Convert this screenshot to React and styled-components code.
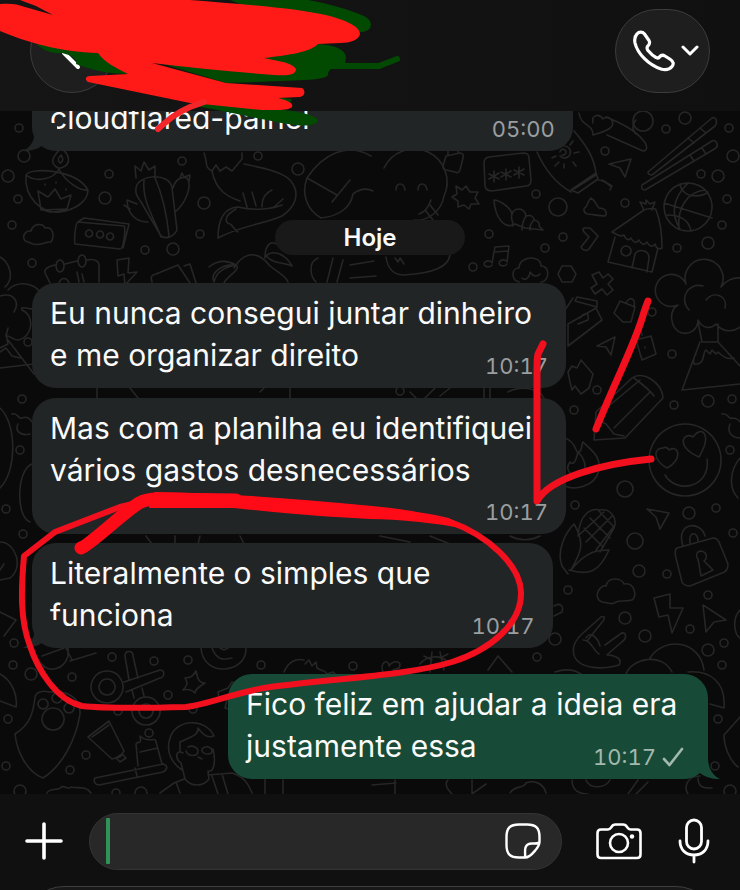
import styled, { createGlobalStyle } from "styled-components"

const GlobalStyle = createGlobalStyle`
    * {
        box-sizing: border-box;
    }

    body {
        margin: 0;
        background: #0a0a0a;
        font-family: Inter, "Liberation Sans", sans-serif;
    }
`;

const Page = styled.div`
    position: relative;
    display: flex;
    flex-direction: column;
    height: 100vh;
    overflow: hidden;
    color: #fafafa;
`;

const IconButton = styled.button`
    display: flex;
    align-items: center;
    justify-content: center;
    padding: 0;
    border: none;
    background: none;
    color: #ffffff;
    cursor: pointer;
`;

//Header
const Header = styled.header`
    display: flex;
    justify-content: space-between;
    flex-shrink: 0;
    height: 111px;
    padding: 9px 30px;
    background: linear-gradient(90deg, #151515, #101010);
    z-index: 1;
`;

const RoundButton = styled(IconButton)`
    height: 84px;
    min-width: 84px;
    border: 1px solid #3c3c3c;
    border-radius: 42px;
    background: #1e1e1e;
`;

const CallButton = styled(RoundButton)`
    gap: 6px;
    width: 95px;
    padding-left: 6px;
`;

//Chat
const Chat = styled.main`
    position: relative;
    display: flex;
    flex: 1;
    flex-direction: column;
    justify-content: flex-end;
    min-height: 0;
    padding: 0 32px 15px;
    overflow: hidden;
    background: #0a0a0a;
`;

const WallpaperSvg = styled.svg`
    position: absolute;
    inset: 0;
    width: 100%;
    height: 100%;
    fill: none;
    stroke: #262626;
    stroke-width: 1.6;
    stroke-linecap: round;
    stroke-linejoin: round;
`;

const Day = styled.div`
    position: relative;
    align-self: center;
    width: 28%;
    margin: 69px 0 28px;
    padding-top: 1px;
    border-radius: 18px;
    background: #191919;
    font-size: 24px;
    font-weight: 600;
    line-height: 34px;
    text-align: center;
`;

const Bubble = styled.article`
    position: relative;
    display: grid;
    flex-shrink: 0;
    align-self: ${({ $mine }) => ($mine ? "flex-end" : "flex-start")};
    width: ${({ $width }) => $width};
    margin-top: ${({ $gap }) => $gap || 0}px;
    padding: 9px 18px 12px;
    border-radius: 24px;
    background: ${({ $mine }) => ($mine ? "#174b38" : "#222526")};
`;

const Text = styled.p`
    grid-area: 1 / 1;
    justify-self: start;
    margin: 0;
    padding-bottom: ${({ $roomy }) => ($roomy ? 31 : 0)}px;
    font-size: 30px;
    line-height: 42px;
    white-space: pre;
`;

const Meta = styled.div`
    display: flex;
    grid-area: 1 / 1;
    align-items: center;
    align-self: end;
    justify-self: end;
    gap: 6px;
    padding-right: ${({ $mine }) => ($mine ? 6 : 0)}px;
    color: ${({ $mine }) => ($mine ? "#a3b8ae" : "#9b9ea0")};
    font-size: 22px;
    font-variant-numeric: tabular-nums;
    line-height: 20px;
`;

const TailSvg = styled.svg`
    position: absolute;
    bottom: 0;
    ${({ $mine }) => ($mine ? "right: -12px;" : "left: -9px; transform: scaleX(-1);")}
    width: 34px;
    height: 28px;
    fill: ${({ $mine }) => ($mine ? "#174b38" : "#222526")};
`;

//Composer
const Composer = styled.footer`
    display: flex;
    align-items: center;
    flex-shrink: 0;
    height: 92px;
    padding: 2px 30px 0 24px;
    background: #101010;
`;

const Field = styled.label`
    display: flex;
    flex: 1;
    align-items: center;
    min-width: 0;
    height: 57px;
    margin: 0 34px 0 25px;
    padding: 0 20px 0 16px;
    border: 1px solid #343434;
    border-radius: 29px;
    background: #282828;
`;

const Caret = styled.span`
    width: 4px;
    height: 46px;
    border-radius: 1px;
    background: #2f9259;
`;

const Input = styled.input`
    flex: 1;
    min-width: 0;
    border: none;
    outline: none;
    background: none;
    color: #fafafa;
    caret-color: #2f9259;
    font: inherit;
    font-size: 30px;
`;

const Actions = styled.div`
    display: flex;
    align-items: center;
    gap: 36px;
`;

const Keyboard = styled.div`
    flex-shrink: 0;
    height: 4px;
    padding: 0 24px;
    overflow: hidden;
    background: #101010;
`;

const KeyboardTop = styled.div`
    height: 80px;
    border: 1px solid #3f3f3f;
    border-radius: 40px;
    background: #181818;
`;

const MarkupSvg = styled.svg`
    position: absolute;
    inset: 0;
    width: 100%;
    height: 100%;
    fill: none;
    stroke-linecap: round;
    stroke-linejoin: round;
    pointer-events: none;
    z-index: 2;
`;

const dots = [
    [24, 156, 6], [8, 176, 6], [18, 199, 4], [12, 225, 4], [109, 174, 4], [105, 198, 6], [182, 161, 4],
    [204, 203, 6], [200, 234, 4], [145, 250, 4], [173, 249, 6], [32, 263, 4], [258, 156, 4], [298, 169, 6],
    [19, 128, 4], [685, 118, 6], [666, 129, 4], [729, 128, 4], [643, 121, 10], [605, 151, 4], [701, 174, 4],
    [718, 176, 6], [733, 156, 6], [536, 194, 4], [558, 207, 9], [625, 203, 4], [727, 199, 4], [722, 225, 4],
    [489, 234, 4], [563, 237, 4], [545, 248, 4], [473, 267, 4], [708, 243, 6], [677, 248, 4], [652, 312, 4],
    [672, 354, 4], [597, 390, 4], [674, 405, 4], [708, 401, 6], [732, 399, 4], [574, 410, 4], [625, 489, 8],
    [730, 450, 4], [575, 505, 4], [716, 508, 4], [689, 513, 6], [635, 541, 8], [733, 533, 4], [639, 571, 6],
    [667, 574, 4], [568, 590, 4], [625, 618, 6], [645, 636, 6], [690, 629, 4], [708, 595, 4], [708, 650, 6],
    [724, 643, 4], [722, 665, 4], [555, 639, 6], [537, 657, 4], [718, 719, 4], [715, 766, 4], [730, 791, 6],
    [22, 399, 4], [20, 450, 4], [6, 509, 4], [23, 534, 4], [14, 643, 4], [13, 665, 4], [31, 674, 6],
    [72, 677, 4], [112, 657, 4], [154, 661, 4], [188, 660, 4], [168, 695, 4], [261, 665, 4], [353, 666, 4],
    [149, 733, 4], [86, 755, 4], [70, 770, 4], [6, 766, 4], [8, 719, 4], [20, 791, 6], [116, 793, 4],
    [141, 793, 6], [193, 709, 4], [118, 711, 4], [28, 342, 4], [400, 391, 4],
];

//Doodles by area of the wallpaper
const doodles = [
    //diya lamp
    "M26 175c4-8 50-6 62 15 0 12-14 20-28 22-18 2-36-14-34-37zM26 175c10 8 28 4 33-6 6 12 20 22 29 21M58 168c-10-6-4-12 3-20 8 6 12 16 0 20zM60 163c-4-4 0-6 1-8 2 3 3 6-1 8M38 191l10 6 7-8 6 10 10-4-4 14-26 1zM42 209c6 4 16 4 24 0M45 184v1M56 182v1M66 189v1",
    //cactus
    "M136 188c2-14 34-16 36 0l5 42c-4 8-12 9-16 6l-20-34c-4-6-6-8-5-14zM144 180c-2 20 8 34 17 57M155 178c8 18 12 38 14 58M136 178l-1-12 6 5 3-9 5 8 6-4v12M173 188c2-8 8-12 14-10 6 8-2 26-12 34M180 178l2-5 2 4 6-2-1 6M137 204l-10-4 1 8c4 10 12 14 20 14M124 205l6 4",
    //speaker, cloud
    "M78 222c-3 0-4 22-3 22l45 5c4 0 6-23 4-23zM78 222l6-4 45 6-6 24M89 230a3.500 3.500 0 1 0 .1 0M100 231a3.500 3.500 0 1 0 .1 0M110 233a3.500 3.500 0 1 0 .1 0",
    "M28 242c-8-2-4-12 3-11 2-8 12-8 14-3 8-2 10 8 6 14-8 0-10 4-18 2z",
    //calendar, bolt
    "M50 283l-5-10c-2-6 10-8 10-8M65 264l12-3M86 260c10-2 14 2 13 8v14M60 260a4 6 0 1 0 .1 0M82 255a4 6 0 1 0 .1 0M59 283c2-6 8-6 10 0M79 282l-2-10M84 282l-2-8M117 260l12-2-1 15 9-1-12 13-1-11-6 2z",
    "M152 282c-2-6 0-7 4-8l22-9 12 18M184 266l6-2 6 19",
    //fox
    "M204 153c4 10 0 14 8 18l4-6 4 6 6-4 6 4 10-12v-6M212 171c4 20 16 26 28 30M244 164c20 4 38 8 46 16 12 14 4 28-8 36-18 8-42 10-64 22 0-18 6-30 20-31 16 4 34 2 44-2M236 209c-14 8-10 14-6 15 2 0 4 6 8 8M243 193l4 14M252 192l4 14M262 207c0-10 4-14 10-17M274 207l9-8",
    //cap and handset
    "M307 178c16-24 40-36 64-22M307 178l30 17M332 202l18-22M307 178c-6 16 0 32 14 40 20-2 30-12 32-24 8-6 14-6 20-3",
    //smiley behind the day label
    "M384 168a30 30 0 0 1 60 28c-2 14-16 26-30 24M396 190c0-8 8-8 9 0M418 190c0-8 8-8 9 0M431 200c-2 6-6 12-12 14M425 210l8 10M430 205l8 10",
    //palm tree and basket
    "M209 267c10-8 20-6 27-2-12 2-20 8-22 17-4-8 6-18 22-17 6 4-10 12-12 18M234 268c8-14 22-20 36-2 10 8 16 10 18 16M265 258c0-16 8-18 14-12M266 256c6-6 18-4 26 10-10-4-18-2-26-10M318 258c-10 4-8 18-2 24M333 258l-6 24M343 260l-6 22M350 265l24-4M350 278l26-2",
    "M386 257c2 14 10 18 18 18 30-2 44-8 46-20M395 258l3 4 2-4 4 6",
    //padlock, password, jigsaw
    "M446 156l14-3c3 0 4 2 3 5l-3 12c-1 3-3 3-5 2l-9-2c-2 0-3-2-3-4zM448 155v-4M458 153v-4",
    "M484 163q0-5 5-6l34-4q6 0 6 5l2 22q0 6-5 6l-34 5q-6 0-7-5zM494 171v11M489 174l10 5M499 173l-10 6M506 169v11M501 172l10 5M511 171l-10 6M519 167v11M514 170l10 5M524 169l-10 6",
    "M456 186l6 4 4-4 4 6 8 0-3 6 4 6-8 0-2 5-5-4-6 2v-6l-6-4 5-3z",
    //shell
    "M494 200c4 0 16 6 18 14 2-6 12-8 14 2 6-2 8 2 8 4 4 0 6 4 5 6l4 4-18-2-10-4c-10 6-20-6-21-24zM512 214c-2 6 2 8 1 12M526 216c-4 6-4 10-4 14M534 220c-4 4-4 6-4 10",
    //balloon
    "M537 152c8 18 20 32 34 40M574 131c12 14 20 26 22 42M571 190l25-17 2 6-20 14zM574 189l22-14M564 146a6 6 0 1 1-4 10M560 152a3 3 0 1 1 2 3M552 158l4-2M555 166l4-4M564 164v4M573 162l3 4M574 153l5-1M570 145l3-4M598 180c6 0 10 4 12 6M602 180l10 6-2 4M586 207c2-4 2-6 5-9 6 4 4 6 8 10 8 0 8 6 6 8-6 0-14-2-18-2-4-2-4-6-1-7z",
    //arm, heart
    "M579 113c2 14 14 10 14 22 14-4 24-8 18-16-4-4-8 0-8 0-4-6-12-4-10 4M606 117c10 4 28 12 36 22 6 6 6 12 1 12l-36-16M636 134c-4-4-4-10 0-14",
    //chopsticks
    "M648 172l64-54c4-2 6 4 3 8l-63 49c-3 0-4-1-4-3zM688 138l6 5M700 128l6 5M642 185l70-44c4-2 7 4 4 7l-71 42c-3 0-4-2-3-5zM690 155l4 6M702 148l4 6",
    "M609 164l22-5-6 18-5-9zM584 228c-3 2 2 6 5 9l-8 10c2 4 6 4 8 2l9-13-8-8z",
    //basketball
    "M688 183a24 24 0 1 0 .1 0M664 203l48 15M680 184c2 14 20 14 28 8M688 183c-14 14-18 30-8 46M667 215c14 0 22 6 24 16M679 228c-2-20 8-36 26-38",
    //hut
    "M612 232l32-22c4-2 12-2 12 0 4 10 6 22 6 38-4 2-6 0-7-4-3 4-6 2-8-2-3 4-6 2-8-2-3 4-6 2-8-2-3 4-6 0-7-3-4 2-6 0-12-3zM615 237l-7 25 44 10 6-24M632 268l3-14c4-6 14-4 14 4l-2 14M626 246a5 5 0 1 0 .1 0M644 210l-4-8 6 2 0-4 4 4 5-2-3 8",
    //music note, tree, nut
    "M495 247l14-1-2 16M495 247l-3 16M494 252l14-1M492 263a4 3 0 1 0-.1 2M507 262a4 3 0 1 0-.1 2",
    "M519 282c-8-2-8-14 0-14 0-12 22-14 22-2 10 0 8 16 0 16M522 278c4 4 8-2 8-6 4 6 8 4 10 2M562 266h9l5 8-4 8h-10l-4-8z",
    "M592 275l7-3 4 6 5-4 5 5-5 5 5 6-6 5-5-6-7 5-4-6 6-4z",
    //volcano
    "M686 284a19 19 0 1 1 35 3M686 284a16 16 0 1 0-8 21M703 286c-16-4-24 14-14 24M678 305c-10 6-8 24 4 28 8 2 16-4 16-13 4 8 12 10 18 4 8 10 20 8 28 0M721 287c4-6 12-10 20-9M706 300c8-10 22-4 19 8M698 322l4 20h16v-18M700 342l-18 48 58-6M718 342l22 24M696 354c-4 4-2 8-2 10 12 2 8-12 12-14l4 4 2-4 4 4 2-2c4 4 10 8 16 6",
    //bag and mail
    "M565 310l8-12M577 297l20 4v6l-22-6zM568 324l28-16 6 12-34 26zM580 318c4-6 10-6 8 2l-10 4M614 313l6-12 15 6-4 15-8 0zM626 303c4-8 10-4 8 4M597 346l18-9-4 18-5-8zM636 340l15-4 5 18-14 6zM642 335l-2-6M645 347v1M568 372l4-6 5 2 4-8 12 14-4 14-8 6-6-8-3 4-2-8z",
    //pencil
    "M594 440l2-28 36-34c10-8 30 4 31 20l-38 40-31 2zM604 410l36-30M634 378c8 6 16 12 20 18M650 392l-36 36M594 428l4-8 8 4 8 10 10 2",
    //smiley with heart eyes
    "M685 424a36 36 0 1 0 .1 0M667 468c-14-8-14-20-4-20 4-2 6 2 6 2 10-6 14 10-2 18zM699 457c-24-10-16-26-6-20 8-12 20-4 6 20zM665 475c12 20 46 12 42-16",
    "M565 438c12 4 10 16 14 14 4-2 2-8 4-10 8 8 18 14 16 28-4 18-26 20-34 16M570 462c4 4 6-2 8-10 8 8 10 20 2 24-8 2-16-6-10-14",
    //corn
    "M578 536c2-24 14-28 22-26 10-2 18 8 14 18l-14 24M568 574l-6-8c-6-16 4-34 12-42 12 20 6 30-3 46 16-20 28-20 38-20-10 22-20 26-40 20M584 528l18 18M590 518l20 20M599 511l15 16M612 516l-26 26M604 512l-26 24M614 526l-18 24",
    //plane, padlock
    "M647 509l22 4-9 16-4-12zM677 548l36-10q4 0 6 4l9 22c0 4-2 8-6 9l-32 13q-6 0-8-4l-6-24q-2-8 1-10zM683 546c-8-24 18-26 22-10M690 543c-2-12 8-12 8-2M698 552a5 5 0 1 1 6 9l9 9-12 6-3-17a5 5 0 0 1 0-7",
    "M602 602c-10-4-2-18 4-16 2-10 16-8 18-2 10-2 14 12 8 16-10 2-12 0-16 2-4 4-10 0-14 0zM654 598l16-4 0 14 13 0-11 25-4-18-9 2zM703 605l23 15-12 2-8 10z",
    //hand
    "M583 633l18-16c4-2 4 2 2 4l-16 20M583 633c-14 12-14 30 8 34 10 2 22 0 28-2 4-6-4-10-12-10 6-6 12-10 18-16 2-6-2-8-6-4l-14 10M583 640c8 0 10 10 16 14M586 638c4-8 12 0 14 8M554 606c6-4 10 0 8 6l-8 4",
    //clouds right of the answer
    "M626 674c6-16 36-22 46-2M650 658c14-22 50-18 54 12M688 672c22-2 38 10 36 36l-14-4M740 717l-16 18c0 12 6 26 14 32M740 458c-10 12-12 30-2 40M740 610c-8 8-6 24 0 28M722 414c6-2 6 6 10 4 6 0 8 4 8 4M730 424c-4 10 4 14 10 14",
    //left edge
    "M0 257c8 4 16 20 5 30M8 290c12-12 32-4 32 4M0 296c14-4 20 6 14 16M38 310c-12-2-18-4-16 0 14 6 10 28-4 30-6 0-10-6-12-4l2-8M6 334l2 10-8 4M8 340l26 34M0 368l34-4M0 352l6-4 6 8 8 2",
    "M12 414c6-2 6 6 10 4 4-2 8 0 10 4M18 424c-4 8 4 12 12 10M0 408c16 14 18 62 0 80M32 464c-16 6-16 54-2 58M0 542c16 0 24 26 10 36l-10 2M0 570l4-6M0 612l16 8-12 16M0 674c12 6 18 22 16 33l-16-6",
    //paw bone
    "M35 698c0-6 8-8 14-6 16-2 32 4 31 22-4 26-18 52-37 64-16-6-26-26-28-44 16-10 18-22 20-36zM53 708a11 11 0 1 0 .1 0M43 699a5 5 0 1 0 .1 0M57 693a5 5 0 1 0 .1 0M69 703a5 5 0 1 0 .1 0",
    "M40 662c8 12 24 8 28-6v-8M42 656l22-8M70 661l26-8M66 648l6 12",
    //plane
    "M107 671a16 16 0 1 0 .1 0M107 679a8 8 0 1 0 .1 0M124 682l36-12c6 0 4 8 0 8l-34 14M129 680l-4-24c0-6 8-6 8 0l5 22M132 690l2 8M142 688l2 8M146 697a14 14 0 1 0 .1 0M146 704a7 7 0 1 0 .1 0",
    "M196 671c2 10 4 12 9 12-6 4-10 6-10 10-4-4-8-4-12-3 6-6 4-8 2-12 6 0 8-2 11-7zM201 648c2 30 46 26 45 0M212 648c6 16 16 10 20 10M220 648l4 2 4-2M218 692l10-4 4-6 10 4-4 4 6 6-8 4-3 10-8-2 2-8-8-2z",
    //toothpaste and brush
    "M88 737l21-16 15 30-4 6-8 2zM92 737l17-12M116 758l6-4 4 4-6 4zM95 778l68-14c6 2 4 6 0 8l-64 13c-4 0-6-4-4-7zM135 768l2 8M138 766l-2-22c2-4 6 2 4-8 8 8 16 0 16 6l6 22M140 752l18-4",
    //person
    "M182 770c-12-8-16-20-12-32 6-20 36-20 44-2-6 2-10 0-16-8 0 8-6 8-18 14v10M183 753c-8-4-8 6-2 10l4 16c6 8 18 8 24 0l-1-8c6 2 8-10 5-22M188 747c4-2 10 0 10 4 0 6-10 6-12 0M202 749c4-4 10-2 10 2s-8 4-10 0zM198 757l4 2M184 779l-10 4-14 10M176 782l4 11M208 775l24-2c12 4 16 10 20 20M212 776l6 18M222 774l6 20M265 778v16M283 780v14",
    "M47 793c2-6 14-2 14-6 4-2 8 4 10 0 6 2 14-2 20 6",
    //below the third bubble
    "M284 672c4-10 12-14 20-12M305 664l4-4 3 6 4-4 1 6c6 4 8 2 10 6l6-2 6 6M383 672c-4-10 6-14 6-6 4-6 14-6 10 2l-6 2M420 664c6-8 20-10 28-2M432 652l-2 20M440 652l4 18M424 656l8 4M448 654l-8 4M488 670l10-14 14 16M555 672c12-4 20-2 26 2",
    //bottom row
    "M395 780v14M372 785l24-2M448 780c-4 4 0 10 4 14M472 780v14l14-10M510 793c4-8 14-4 16-10 10-4 18 2 20 10M572 780c0 10 6 14 16 14M586 780c4 10 20 8 24 0M628 794l10-14M636 794l12-12M700 776c-14 0-16 12-12 18M698 778c0 10 6 10 14 10",
    //between bubbles
    "M97 388v10M130 388l8 10M260 392l4-4M290 388v10M410 392l6 6M425 398l10-10M440 396l10-8M508 392c16-8 32-2 36 6M484 388v10M490 388v10M146 536l6 8M175 536v8M200 536l-2 8M240 536l4 8M380 536l30 6M430 536l20 8M510 536c12 6 22 4 30 0",
];

function Wallpaper() {
    return (
        <WallpaperSvg viewBox="0 111 740 683" preserveAspectRatio="xMidYMid slice" aria-hidden="true">
            {dots.map(([x, y, r]) => (
                <circle key={`${x}-${y}`} cx={x} cy={y} r={r} />
            ))}
            {doodles.map((d) => (
                <path key={d} d={d} />
            ))}
        </WallpaperSvg>
    );
}

function Tail({ mine }) {
    return (
        <TailSvg $mine={mine} viewBox="0 0 34 28">
            <path d="M0 0H22V6C22 17 26 24 34 28C26 28 19 26 14 22L0 28Z" />
        </TailSvg>
    );
}

const messages = [
    { text: "cloudflared-painel", time: "05:00", width: "80%", tail: true },
    { day: "Hoje" },
    { text: "Eu nunca consegui juntar dinheiro\ne me organizar direito", time: "10:17", width: "79%" },
    { text: "Mas com a planilha eu identifiquei\nvários gastos desnecessários", time: "10:17", width: "79%", gap: 10, roomy: true },
    { text: "Literalmente o simples que\nfunciona", time: "10:17", width: "77%", gap: 9, tail: true },
    { text: "Fico feliz em ajudar a ideia era\njustamente essa", time: "10:17", width: "71%", gap: 26, tail: true, mine: true },
];

function Message({ text, time, width, gap, tail, roomy, mine }) {
    return (
        <Bubble $mine={mine} $width={width} $gap={gap}>
            {tail && <Tail mine={mine} />}
            <Text $roomy={roomy}>{text}</Text>
            <Meta $mine={mine}>
                <time>{time}</time>
                {mine && (
                    <svg width="22" height="20" viewBox="0 0 22 20" fill="none" stroke="currentColor" strokeWidth="2.6" strokeLinecap="round" strokeLinejoin="round">
                        <path d="M2 12L7.5 18L20 2" />
                    </svg>
                )}
            </Meta>
        </Bubble>
    );
}

//Hand drawn strokes on top of the conversation
function Markup() {
    return (
        <MarkupSvg viewBox="0 0 740 890" preserveAspectRatio="xMidYMin slice" aria-hidden="true">
            <g fill="#024a02">
                <path d="M230 0H308C330 4 350 10 364 16C374 21 373 31 362 32L300 28Z" />
                <path d="M36 42C50 46 74 52 98 53L128 74C108 74 92 70 76 64C78 60 72 55 62 53C52 54 40 50 36 42Z" />
                <path d="M150 60L262 58L318 44C334 45 346 49 346 58L344 68C332 66 328 70 328 75C324 81 300 80 226 83Z" />
                <path d="M196 103L284 110C302 112 318 116 318 121C314 127 300 126 288 124C262 120 232 112 196 106Z" />
                <path d="M275 97L292 99L290 103L275 100Z" />
            </g>
            <path d="M328 66H379L397 59" stroke="#024a02" strokeWidth="6" />
            <g fill="#ff1a17">
                <path d="M20 0H190C240 4 296 8 330 16C348 21 360 27 360 34C359 40 350 43 340 43L318 44C310 52 290 55 264 58C276 61 292 62 296 69C296 75 288 76 274 75C234 72 192 68 152 63L226 83L302 88C306 91 305 96 300 97L278 98C286 100 294 103 292 107C288 111 274 110 262 110L202 104L190 103L88 82C84 79 86 76 90 76L128 74C116 68 104 62 98 53C60 52 26 42 0 31V4C10 3 18 4 25 7L53 15L36 6Z" />
            </g>
            <path d="M158 129C168 120 176 113 190 107L204 102" stroke="#f5262a" strokeWidth="6" />
            <g stroke="#f2101f" strokeWidth="7">
                <path d="M648 301L644 312C636 342 620 370 596 429" />
                <path d="M543 344L538 354Q537 358 537 370V501C550 478 600 464 651 459" />
                <path strokeWidth="6" d="M150 500L120 507L55 532L24 556C21 590 20 620 30 646C38 670 56 700 82 706C110 709 150 708 186 707C210 704 236 692 270 687C340 678 410 675 452 662C490 650 522 624 521 592C520 566 490 536 448 521C430 516 410 514 392 513" />
                <path stroke="#ff0a17" strokeWidth="13" d="M81 548C90 545 124 512 139 503Q146 499 158 499L236 500" />
                <path stroke="#ff0a17" fill="#ff0a17" strokeWidth="2" d="M155 493C230 494 300 500 372 507C410 510 446 518 466 528C440 523 400 518 370 518C320 516 280 512 234 507H150Z" />
            </g>
        </MarkupSvg>
    );
}

export default function App() {
    return (
        <Page>
            <GlobalStyle />
            <Header>
                <RoundButton aria-label="Voltar">
                    <svg width="24" height="40" viewBox="0 0 24 40" fill="none" stroke="currentColor" strokeWidth="4" strokeLinecap="round" strokeLinejoin="round">
                        <path d="M20 4L4 22L18 36" />
                    </svg>
                </RoundButton>
                <CallButton aria-label="Ligar">
                    <svg width="42" height="42" viewBox="0 0 42 42" fill="none" stroke="currentColor" strokeWidth="3.2" strokeLinejoin="round">
                        <path d="M4 4C6 1.500 9.500 1.500 11.500 4L16 10.500C17.500 13 16.500 14.500 14.500 16.500C13.500 18 14 19 15 20.500C17.500 23.500 20 26 23 27.500C24.500 28.500 25.500 28 26.500 27C28 25 29.500 24.500 32 26L37.500 29.500C40.500 31.500 41 34 39 36.500C36.500 39.500 33 40.500 28 39C15.500 35 4.500 23.500 2 13C1.200 9 2 6 4 4Z" />
                    </svg>
                    <svg width="18" height="12" viewBox="0 0 18 12" fill="none" stroke="currentColor" strokeWidth="3" strokeLinecap="round" strokeLinejoin="round">
                        <path d="M2 2L9 9L16 2" />
                    </svg>
                </CallButton>
            </Header>
            <Chat>
                <Wallpaper />
                {messages.map((item) =>
                    item.day ? <Day key={item.day}>{item.day}</Day> : <Message key={item.text} {...item} />
                )}
            </Chat>
            <Composer>
                <IconButton aria-label="Anexar">
                    <svg width="40" height="40" viewBox="0 0 40 40" stroke="currentColor" strokeWidth="3.6" strokeLinecap="round">
                        <path d="M20 3V37M3 20H37" />
                    </svg>
                </IconButton>
                <Field>
                    <Caret />
                    <Input aria-label="Mensagem" />
                    <IconButton aria-label="Figurinhas">
                        <svg width="36" height="36" viewBox="0 0 36 36" fill="none" stroke="currentColor" strokeWidth="2.4" strokeLinejoin="round">
                            <path d="M20 34.500H14C5 34.500 1.500 31 1.500 22V14C1.500 5 5 1.500 14 1.500H22C31 1.500 34.500 5 34.500 14V19C34.500 22 33 24 31 26.500C28 30 25 34.500 20 34.500ZM20 34.500C20.500 31 19.500 28 20.500 24.500C21.500 21.500 24 20.500 27 20.500C30 20.500 33 21 34.500 19" />
                        </svg>
                    </IconButton>
                </Field>
                <Actions>
                    <IconButton aria-label="Câmera">
                        <svg width="46" height="38" viewBox="0 0 46 38" fill="none" stroke="currentColor" strokeWidth="2.6" strokeLinejoin="round">
                            <path d="M5 7.500H12C14 7.500 14.500 6.500 15.500 5C16.500 3 17.500 2.500 19.500 2.500H27C29 2.500 30 3 31 5C32 6.500 32.500 7.500 34.500 7.500H41Q44.500 7.500 44.500 11V32.500Q44.500 36 41 36H5Q1.500 36 1.500 32.500V11Q1.500 7.500 5 7.500Z" />
                            <circle cx="23" cy="21" r="9" />
                            <circle cx="36" cy="14.5" r="2.2" fill="currentColor" stroke="none" />
                        </svg>
                    </IconButton>
                    <IconButton aria-label="Gravar áudio">
                        <svg width="32" height="46" viewBox="0 0 32 46" fill="none" stroke="currentColor" strokeWidth="2.8" strokeLinecap="round">
                            <rect x="8.5" y="2" width="15" height="29" rx="7.5" />
                            <path d="M2 23C2 32 8 37 16 37S30 32 30 23M16 37V44" />
                        </svg>
                    </IconButton>
                </Actions>
            </Composer>
            <Keyboard>
                <KeyboardTop />
            </Keyboard>
            <Markup />
        </Page>
    );
}
